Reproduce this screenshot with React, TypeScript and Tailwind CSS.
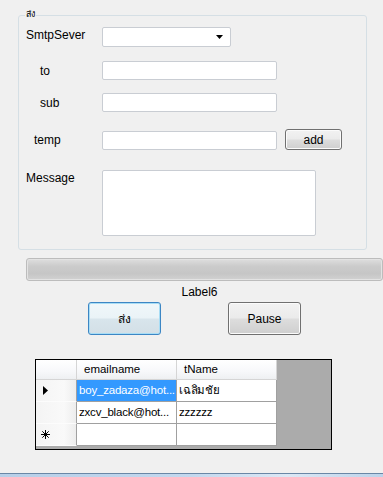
import React from 'react'

const font = { fontFamily: '"Liberation Sans", "Noto Sans", "DejaVu Sans", sans-serif' }

function TextBox({ className = '' }: { className?: string }) {
  return <div className={`bg-white border border-[#c9cdd3] rounded-[2px] ${className}`} />
}

function WinButton({ label, focused = false, className = '' }: { label: string; focused?: boolean; className?: string }) {
  return (
    <div
      className={`flex items-center justify-center rounded-[3px] border text-[12px] text-black ${
        focused
          ? 'border-[#3c86c4] shadow-[inset_0_0_0_1px_#a8ddf5] bg-[linear-gradient(#f0f7fa_0%,#eaf3f7_48%,#d8e5ec_52%,#d3dfe6_100%)]'
          : 'border-[#707070] shadow-[inset_0_0_0_1px_#fbfbfb] bg-[linear-gradient(#f2f2f2_0%,#ebebeb_48%,#dddddd_52%,#cfcfcf_100%)]'
      } ${className}`}
    >
      {label}
    </div>
  )
}

function HeaderCell({ children, className = '' }: { children?: React.ReactNode; className?: string }) {
  return (
    <div
      className={`h-[20px] flex items-center pl-[7px] border-r border-b border-[#d5d5d5] bg-[linear-gradient(#ffffff_0%,#f7f8fa_60%,#eef0f2_100%)] ${className}`}
    >
      {children}
    </div>
  )
}

function RowHead({ children }: { children?: React.ReactNode }) {
  return (
    <div className="h-[22px] flex items-center pl-[7px] border-r border-[#a0a0a0] border-b border-b-[#fcfcfc] bg-[linear-gradient(90deg,#f4f4f4_0%,#f9f9f9_70%,#ededed_100%)]">
      {children}
    </div>
  )
}

function Cell({ children, selected = false }: { children?: React.ReactNode; selected?: boolean }) {
  return (
    <div
      className={`h-[22px] flex items-center pl-[2px] border-r border-b border-[#a0a0a0] overflow-hidden whitespace-nowrap tracking-[-0.2px] ${
        selected ? 'bg-[#3399ff] text-white' : 'bg-white text-black'
      }`}
    >
      {children}
    </div>
  )
}

export default function App() {
  return (
    <div className="w-[383px] h-[477px] bg-[#f0f0f0] flex flex-col overflow-hidden text-[11px] text-black" style={font}>
      {/* group box */}
      <div className="relative mt-[15px] ml-[18px] w-[349px] h-[235px] border border-[#d5dfe5] rounded-[3px] pl-[7px]">
        <span className="absolute -top-[8px] left-[6px] px-[1px] bg-[#f0f0f0] text-[9px] leading-[12px]">ส่ง</span>

        <div className="flex items-center mt-[11px] h-[20px]">
          <span className="w-[76px] -mt-[5px] text-[12px]">SmtpSever</span>
          <div className="relative w-[129px] h-[20px] bg-white border border-[#c9cdd3] rounded-[2px]">
            <svg className="absolute right-[6px] top-[7px]" width="8" height="5" viewBox="0 0 8 5">
              <path d="M0 0h7L3.5 4z" fill="#000" />
            </svg>
          </div>
        </div>

        <div className="flex items-center mt-[14px] h-[19px]">
          <span className="w-[76px] pl-[14px] text-[12px]">to</span>
          <TextBox className="w-[175px] h-[19px]" />
        </div>

        <div className="flex items-center mt-[13px] h-[19px]">
          <span className="w-[76px] pl-[14px] text-[12px]">sub</span>
          <TextBox className="w-[175px] h-[19px]" />
        </div>

        <div className="flex items-center mt-[17px] h-[21px]">
          <span className="w-[76px] pl-[8px] text-[12px]">temp</span>
          <TextBox className="w-[175px] h-[19px] mt-[1px]" />
          <WinButton label="add" className="ml-[8px] w-[57px] h-[21px]" />
        </div>

        <div className="flex items-start mt-[20px]">
          <span className="w-[76px] pt-[1px] text-[12px] leading-[14px]">Message</span>
          <TextBox className="w-[214px] h-[66px]" />
        </div>
      </div>

      {/* progress bar */}
      <div className="mt-[8px] ml-[26px] w-[357px] h-[23px] border border-[#bcbcbc] rounded-[3px] shadow-[inset_0_0_0_1px_#e3e3e3] bg-[linear-gradient(#dedede_0%,#cbcbcb_35%,#c6c6c6_70%,#d2d2d2_100%)]" />

      <div className="mt-[4px] pl-[16px] text-center text-[12px] leading-[14px]">Label6</div>

      <div className="flex mt-[3px] ml-[88px]">
        <WinButton label="ส่ง" focused className="w-[73px] h-[33px] text-[9px]" />
        <WinButton label="Pause" className="ml-[67px] w-[73px] h-[33px]" />
      </div>

      {/* data grid */}
      <div className="mt-[24px] ml-[35px] w-[297px] h-[91px] border border-black bg-[#ababab]">
        <div className="grid grid-cols-[41px_100px_100px] w-[241px] text-[11.5px]">
          <HeaderCell className="border-r-[#d5d5d5]" />
          <HeaderCell>emailname</HeaderCell>
          <HeaderCell>tName</HeaderCell>

          <RowHead>
            <svg width="5" height="9" viewBox="0 0 5 9">
              <path d="M0 0l5 4.5L0 9z" fill="#000" />
            </svg>
          </RowHead>
          <Cell selected>boy_zadaza@hot...</Cell>
          <Cell>เฉลิมชัย</Cell>

          <RowHead />
          <Cell>zxcv_black@hot...</Cell>
          <Cell>zzzzzz</Cell>

          <RowHead>
            <svg width="9" height="9" viewBox="0 0 9 9" className="-ml-[2px]">
              <path d="M4.5 0v9M0 4.5h9M1.3 1.3l6.4 6.4M7.7 1.3l-6.4 6.4" stroke="#000" strokeWidth="1" />
            </svg>
          </RowHead>
          <Cell />
          <Cell />
        </div>
      </div>

      {/* taskbar edge */}
      <div className="mt-auto h-[4px] border-t border-[#6a87a6] bg-[linear-gradient(90deg,#b7cfe8_0%,#c3d8ee_50%,#dce8f5_75%,#bcd3ea_100%)]" />
    </div>
  )
}
